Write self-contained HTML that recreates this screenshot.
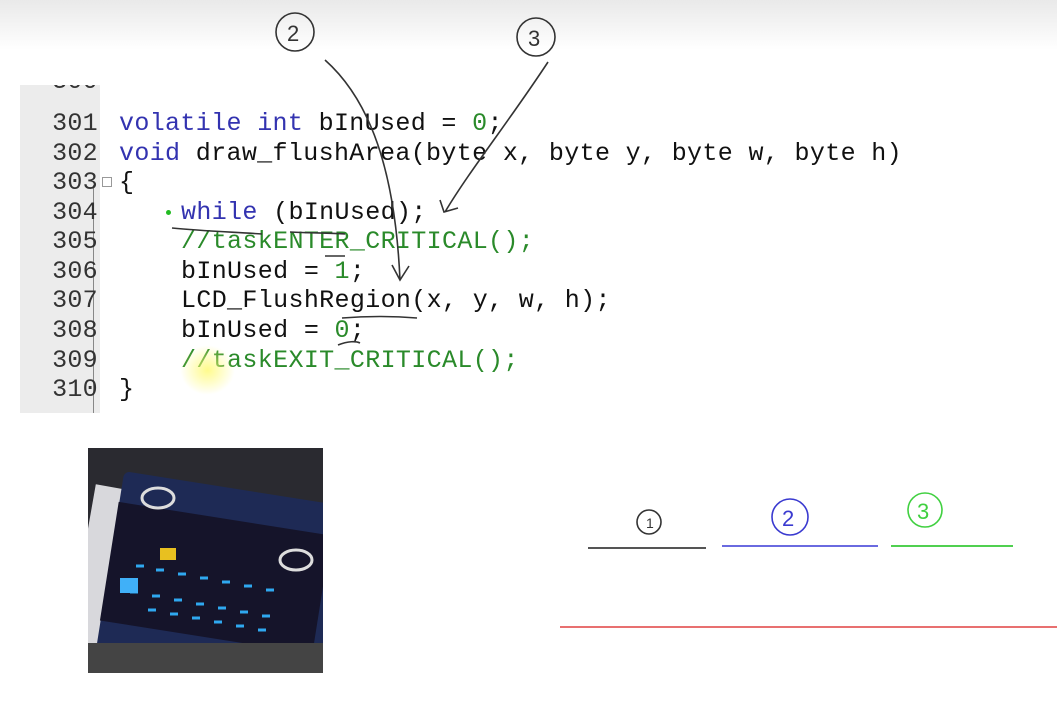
<!DOCTYPE html>
<html><head><meta charset="utf-8"><style>
body{margin:0;width:1057px;height:725px;overflow:hidden;background:#fff;position:relative;font-family:"Liberation Mono",monospace}
.top{position:absolute;left:0;top:0;width:1057px;height:50px;background:linear-gradient(#e9e9e9,#fff)}
.gut{position:absolute;left:20px;top:85px;width:80px;height:328px;background:#ececec}
.ln{position:absolute;left:20px;width:78px;text-align:right;font-size:25px;color:#333;line-height:30px;letter-spacing:.3px}
.code{position:absolute;left:119px;font-size:25px;line-height:30px;white-space:pre;color:#111;letter-spacing:.35px}
.k{color:#3333b0}.c{color:#2a8a2a}.n{color:#2a8a2a}
svg{position:absolute;left:0;top:0}
</style></head><body>
<div class="top"></div>
<div class="gut"></div>
<div style="position:absolute;left:93px;top:185px;width:1px;height:228px;background:#888"></div>
<div style="position:absolute;left:20px;top:85px;width:80px;height:12px;overflow:hidden"><div class="ln" style="top:-18px;left:0">300</div></div>
<div class="ln" style="top:109px">301</div>
<div class="ln" style="top:139px">302</div>
<div class="ln" style="top:168px">303</div>
<div class="ln" style="top:198px">304</div>
<div class="ln" style="top:227px">305</div>
<div class="ln" style="top:257px">306</div>
<div class="ln" style="top:286px">307</div>
<div class="ln" style="top:316px">308</div>
<div class="ln" style="top:346px">309</div>
<div class="ln" style="top:375px">310</div>
<div class="code" style="top:109px"><span class="k">volatile</span> <span class="k">int</span> bInUsed = <span class="n">0</span>;</div>
<div class="code" style="top:139px"><span class="k">void</span> draw_flushArea(byte x, byte y, byte w, byte h)</div>
<div class="code" style="top:168px">{</div>
<div class="code" style="top:198px;left:181px"><span class="k">while</span> (bInUsed);</div>
<div class="code c" style="top:227px;left:181px">//taskENTER_CRITICAL();</div>
<div class="code" style="top:257px;left:181px">bInUsed = <span class="n">1</span>;</div>
<div class="code" style="top:286px;left:181px">LCD_FlushRegion(x, y, w, h);</div>
<div class="code" style="top:316px;left:181px">bInUsed = <span class="n">0</span>;</div>
<div class="code c" style="top:346px;left:181px">//taskEXIT_CRITICAL();</div>
<div class="code" style="top:375px">}</div>
<div style="position:absolute;left:102px;top:177px;width:10px;height:10px;border:1px solid #999;box-sizing:border-box"></div>
<div style="position:absolute;left:166px;top:210px;width:5px;height:5px;border-radius:50%;background:#2b2"></div>
<div style="position:absolute;left:180px;top:345px;width:55px;height:50px;border-radius:50%;background:radial-gradient(rgba(255,250,120,.85),rgba(255,250,150,0) 70%)"></div>
<div style="position:absolute;left:88px;top:448px;width:235px;height:225px;background:#2a2a30;overflow:hidden">
 <div style="position:absolute;left:-10px;top:40px;width:60px;height:200px;background:#d8d8dc;transform:rotate(10deg)"></div>
 <div style="position:absolute;left:20px;top:40px;width:230px;height:190px;background:#1e2a55;transform:rotate(9deg);border-radius:6px"></div>
 <div style="position:absolute;left:20px;top:70px;width:215px;height:120px;background:#15142a;transform:rotate(9deg)"></div>
 <svg width="235" height="225" style="left:0;top:0"><g stroke="#2fa8f0" stroke-width="3">
 <path d="M48 118h8M68 122h8M90 126h8M112 130h8M134 134h8M156 138h8M178 142h8M42 144h8M64 148h8M86 152h8M108 156h8M130 160h8M152 164h8M174 168h8M60 162h8M82 166h8M104 170h8M126 174h8M148 178h8M170 182h8"/></g>
 <rect x="72" y="100" width="16" height="12" fill="#e8c020"/><rect x="32" y="130" width="18" height="15" fill="#40b0f8"/>
 <ellipse cx="70" cy="50" rx="16" ry="10" fill="none" stroke="#ddd" stroke-width="3"/>
 <ellipse cx="208" cy="112" rx="16" ry="10" fill="none" stroke="#ddd" stroke-width="3"/>
 <rect x="0" y="195" width="235" height="30" fill="#444"/></svg>
</div>
<svg width="1057" height="725">
<g fill="none" stroke="#333" stroke-width="1.6">
<circle cx="295" cy="32" r="19"/><circle cx="536" cy="37" r="19"/>
<path d="M325 60C370 100 395 170 400 280M392 265l8 15 9-14"/>
<path d="M548 62C510 120 470 170 445 212M440 200l4 12 14-4"/>
<path d="M172 228c30 3 60 4 90 6M290 232c20 1 40 1 55 2M342 318c25-2 50-2 75 0M338 345c10-4 18-4 22-2M325 256h20"/>
<circle cx="649" cy="522" r="12"/>
</g>
<text x="287" y="41" font-size="22" fill="#333" font-family="Liberation Sans">2</text>
<text x="528" y="46" font-size="22" fill="#333" font-family="Liberation Sans">3</text>
<text x="646" y="528" font-size="14" fill="#333" font-family="Liberation Sans">1</text>
<circle cx="790" cy="517" r="18" fill="none" stroke="#3a3ad0" stroke-width="1.6"/>
<text x="782" y="526" font-size="22" fill="#3a3ad0" font-family="Liberation Sans">2</text>
<circle cx="925" cy="510" r="17" fill="none" stroke="#40d040" stroke-width="1.6"/>
<text x="917" y="519" font-size="22" fill="#40d040" font-family="Liberation Sans">3</text>
<path d="M588 548h118" stroke="#555" stroke-width="2"/>
<path d="M722 546h156" stroke="#6a6ae0" stroke-width="2"/>
<path d="M891 546h122" stroke="#50d050" stroke-width="2"/>
<path d="M560 627h497" stroke="#e87070" stroke-width="2"/>
</svg>
</body></html>
